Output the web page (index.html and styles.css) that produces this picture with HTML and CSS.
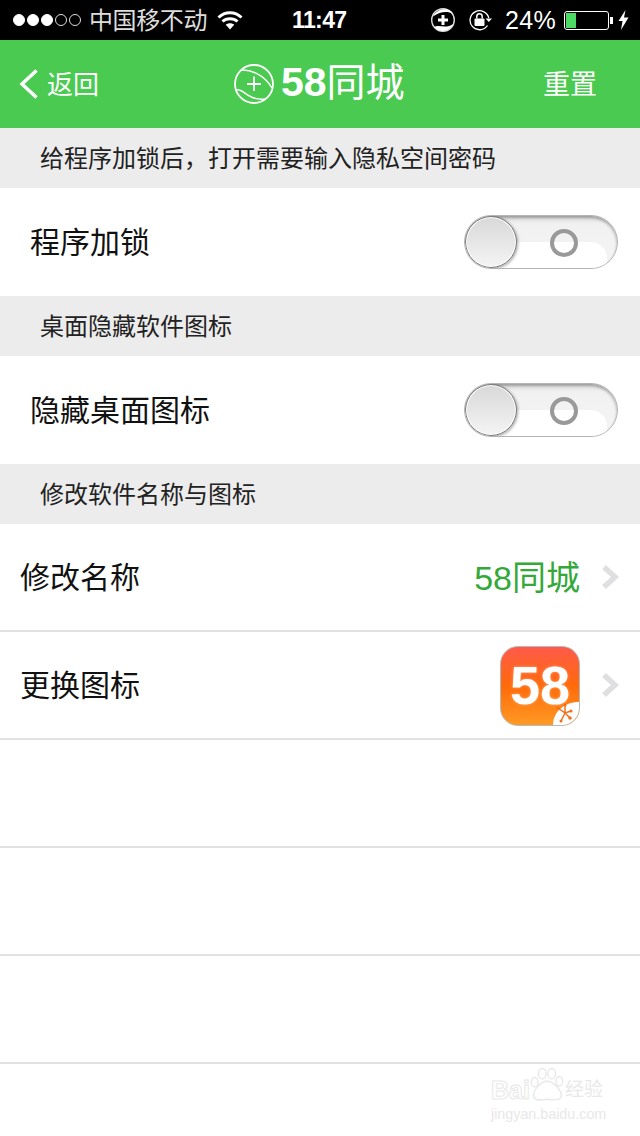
FILE: index.html
```html
<!DOCTYPE html>
<html lang="zh-CN">
<head>
    <meta charset="UTF-8">
    <meta name="viewport" content="width=device-width, initial-scale=1.0">
    <title>58同城</title>
    <link rel="stylesheet" href="styles.css">
</head>
<body>
    <div class="statusbar">
        <div class="status-left">
            <span class="dots">
                <i class="dot on"></i><i class="dot on"></i><i class="dot on"></i><i class="dot"></i><i class="dot"></i>
            </span>
            <span class="carrier">中国移不动</span>
            <svg class="wifi" width="26" height="20" viewBox="0 0 26 20">
                <path d="M1.500 7.500C8 1.200 18 1.200 24.500 7.500" fill="none" stroke="#fff" stroke-width="3"/>
                <path d="M5.500 11.500C9.500 7.800 16.500 7.800 20.500 11.500" fill="none" stroke="#fff" stroke-width="3"/>
                <path d="M13 19.500L8.800 14.800C11 12.800 15 12.800 17.200 14.800Z" fill="#fff"/>
            </svg>
        </div>
        <div class="clock">11:47</div>
        <div class="status-right">
            <svg class="st-plus" width="26" height="26" viewBox="0 0 26 26">
                <circle cx="13" cy="13" r="11.300" fill="none" stroke="#ddd" stroke-width="1.400"/>
                <path d="M3 9.500C6 2 18 -0.500 23 6.500C17 3.800 10 4.500 3 9.500Z" fill="#fff"/>
                <path d="M4 20C9 17 16 22.500 23 17C20 25 9 26.500 4 20Z" fill="#fff"/>
                <path d="M13 8V18M8 13H18" stroke="#fff" stroke-width="3"/>
            </svg>
            <svg class="st-lock" width="24" height="22" viewBox="0 0 24 22">
                <path d="M18.500 16.500A9.500 9.500 0 1 1 19.800 9" fill="none" stroke="#fff" stroke-width="1.300"/>
                <path d="M16.500 9.500H23L19.800 13Z" fill="#fff"/>
                <rect x="5.500" y="9.500" width="10" height="7.500" rx="1" fill="#fff"/>
                <path d="M7.800 9.500V7.500A2.700 2.700 0 0 1 13.200 7.500V9.500" fill="none" stroke="#fff" stroke-width="1.500"/>
            </svg>
            <span class="percent">24%</span>
            <span class="battery"><span class="battery-fill"></span></span>
            <span class="battery-tip"></span>
            <svg class="bolt" width="11" height="20" viewBox="0 0 11 20">
                <path d="M7.500 0L0.500 11H4.500L3 20L10.500 7.500H6Z" fill="#fff"/>
            </svg>
        </div>
    </div>

    <header class="navbar">
        <a class="nav-back">
            <svg width="20" height="32" viewBox="0 0 20 32">
                <path d="M18.500 2.500L4 16L18.500 29.500" fill="none" stroke="#fff" stroke-width="3.500"/>
            </svg>
            <span>返回</span>
        </a>
        <div class="nav-title">
            <svg width="40" height="40" viewBox="0 0 40 40">
                <circle cx="20" cy="20" r="19" fill="none" stroke="#fff" stroke-width="1.800"/>
                <path d="M7 6C16 5.500 30 10 38 24" fill="none" stroke="#fff" stroke-width="1.500"/>
                <path d="M2 26C9 23 13 37 31 35" fill="none" stroke="#fff" stroke-width="1.500"/>
                <path d="M20 12.500V27M13 20H27" stroke="#fff" stroke-width="1.800"/>
            </svg>
            <span class="nav-name"><b>58</b>同城</span>
        </div>
        <a class="nav-reset">重置</a>
    </header>

    <div class="band">给程序加锁后，打开需要输入隐私空间密码</div>
    <div class="row switch-row">
        <span>程序加锁</span>
        <div class="switch"><i class="knob"></i><i class="ring"></i></div>
    </div>

    <div class="band">桌面隐藏软件图标</div>
    <div class="row switch-row">
        <span>隐藏桌面图标</span>
        <div class="switch"><i class="knob"></i><i class="ring"></i></div>
    </div>

    <div class="band">修改软件名称与图标</div>
    <div class="row line">
        <span>修改名称</span>
        <div class="row-right">
            <span class="value">58同城</span>
            <svg class="chevron" width="18" height="26" viewBox="0 0 18 26">
                <path d="M3 3L14 13L3 23" fill="none" stroke="#dfdfe1" stroke-width="5.500"/>
            </svg>
        </div>
    </div>
    <div class="row line">
        <span>更换图标</span>
        <div class="row-right">
            <div class="app-icon">
                <span class="app-num">58</span>
                <svg class="app-corner" width="27" height="27" viewBox="0 0 27 27">
                    <path d="M27 4V27H1C1 14 12 4 27 4Z" fill="#fff"/>
                    <path d="M6 10L13 15L19 13M13 7L13 15L18 20M13 15L9 23" fill="none" stroke="#f0701c" stroke-width="1.500"/>
                    <circle cx="6" cy="10" r="1.600" fill="#f0701c"/>
                    <circle cx="13" cy="7" r="1.500" fill="#f0701c"/>
                    <circle cx="19" cy="13" r="1.600" fill="#f0701c"/>
                    <circle cx="18" cy="20" r="1.800" fill="#f0701c"/>
                    <circle cx="9" cy="23" r="1.500" fill="#f0701c"/>
                </svg>
            </div>
            <svg class="chevron" width="18" height="26" viewBox="0 0 18 26">
                <path d="M3 3L14 13L3 23" fill="none" stroke="#dfdfe1" stroke-width="5.500"/>
            </svg>
        </div>
    </div>
    <div class="row line"></div>
    <div class="row line"></div>
    <div class="row line"></div>

    <!-- 水印 -->
    <div class="watermark">
        <div class="wm-top">
            <span class="wm-bai">Bai</span>
            <svg class="wm-paw" width="36" height="36" viewBox="0 0 38 36">
                <g fill="none" stroke="#e8e8e8" stroke-width="1.500">
                    <ellipse cx="6" cy="15" rx="3.500" ry="5"/>
                    <ellipse cx="14" cy="6" rx="4" ry="5.500"/>
                    <ellipse cx="24" cy="6" rx="4" ry="5.500"/>
                    <ellipse cx="32" cy="14" rx="3.500" ry="5"/>
                    <path d="M19 14C12 14 4 24 5 30C6 35 13 34 19 33C25 34 33 35 34 30C35 24 26 14 19 14Z"/>
                </g>
            </svg>
            <span class="wm-cn">经验</span>
        </div>
        <div class="wm-url">jingyan.baidu.com</div>
    </div>
</body>
</html>
```

FILE: styles.css
```css
* {
    box-sizing: border-box;
}

body {
    position: relative;
    width: 640px;
    height: 1136px;
    margin: 0;
    overflow: hidden;
    background-color: #fff;
    color: #000;
    font-family: "Liberation Sans", "Noto Sans CJK SC", sans-serif;
}

/* status bar */
.statusbar {
    display: flex;
    align-items: center;
    justify-content: space-between;
    height: 40px;
    padding: 0 11px 0 13px;
    background-color: #000;
    color: #fff;
}

.status-left {
    display: flex;
    align-items: center;
    width: 270px;
}

.dots {
    display: flex;
    gap: 2px;
}

.dot {
    width: 12px;
    height: 12px;
    border: 1px solid #ddd;
    border-radius: 50%;
}

.dot.on {
    background-color: #fff;
    border-color: #fff;
}

.carrier {
    margin: 0 0 4px 8px;
    font-size: 24px;
    letter-spacing: -0.4px;
    color: #ddd;
}

.wifi {
    margin-left: 10px;
}

.clock {
    width: 60px;
    margin-left: 9px;
    font-size: 23px;
    font-weight: bold;
    letter-spacing: -0.6px;
}

.status-right {
    display: flex;
    align-items: center;
    margin-left: auto;
}

.st-lock {
    margin-left: 13px;
}

.percent {
    margin-left: 12px;
    font-size: 25px;
    letter-spacing: 0.3px;
}

.battery {
    display: block;
    width: 45px;
    height: 19px;
    margin-left: 8px;
    padding: 1px;
    border: 1px solid #fff;
    border-radius: 3px;
}

.battery-fill {
    display: block;
    width: 10px;
    height: 100%;
    background-color: #4cd964;
}

.battery-tip {
    width: 3px;
    height: 7px;
    margin-left: 1px;
    background-color: #fff;
}

.bolt {
    margin-left: 5px;
}

/* nav bar */
.navbar {
    display: flex;
    align-items: center;
    height: 88px;
    padding: 0 43px 0 18px;
    background-color: #4aca50;
    color: #fff;
}

.nav-back {
    display: flex;
    align-items: center;
    gap: 9px;
    width: 216px;
    font-size: 26px;
}

.nav-back span {
    margin-bottom: 4px;
}

.nav-title {
    display: flex;
    align-items: center;
    gap: 7px;
}

.nav-name {
    margin-bottom: 10px;
    font-size: 39px;
}

.nav-name b {
    font-size: 41px;
}

.nav-reset {
    margin-bottom: 4px;
    margin-left: auto;
    font-size: 27px;
}

/* list */
.band {
    display: flex;
    align-items: center;
    height: 60px;
    padding: 0 0 4px 40px;
    background-color: #ececec;
    font-size: 24px;
    color: #222;
}

.row {
    display: flex;
    align-items: center;
    justify-content: space-between;
    height: 108px;
    padding-left: 20px;
    font-size: 30px;
    color: #111;
    background-color: #fff;
}

.row > span {
    margin-bottom: 4px;
}

.switch-row {
    padding-left: 30px;
    padding-right: 22px;
}

.line {
    border-bottom: 2px solid #e2e2e2;
}

.row-right {
    display: flex;
    align-items: center;
    gap: 21px;
    padding-right: 21px;
}

.value {
    margin-bottom: 4px;
    font-size: 34px;
    color: #34a93a;
}

.switch {
    position: relative;
    width: 154px;
    height: 54px;
    overflow: hidden;
    border: 1px solid #b4b4b4;
    border-radius: 27px;
    background: linear-gradient(#dcdcdc 0, #f1f1f1 8px, #f4f4f4 100%);
    box-shadow: inset 0 2px 3px rgba(0, 0, 0, 0.3);
}

/* glossy lower half of the track */
.switch::after {
    content: "";
    position: absolute;
    top: 26px;
    left: 0;
    width: 142px;
    height: 30px;
    border-top-right-radius: 16px;
    background-color: #fff;
}

.knob {
    position: absolute;
    z-index: 2;
    top: 0;
    left: 0;
    width: 52px;
    height: 52px;
    border: 1px solid #777;
    border-radius: 50%;
    background: linear-gradient(#d8d8d8, #f4f4f4);
    box-shadow: 1px 1px 3px rgba(0, 0, 0, 0.35), inset 0 0 0 1px #fff;
}

.ring {
    position: absolute;
    z-index: 2;
    top: 13px;
    left: 85px;
    width: 28px;
    height: 28px;
    border: 4px solid #999;
    border-radius: 50%;
}

.chevron {
    display: block;
}

.app-icon {
    position: relative;
    width: 80px;
    height: 80px;
    margin-top: 2px;
    overflow: hidden;
    border: 1px solid #b8b8b8;
    border-radius: 18px;
    background: linear-gradient(#ff5a4a 0, #ff6a0a 50%, #ff9a24 100%);
    text-align: center;
}

.app-num {
    display: block;
    font-size: 54px;
    line-height: 76px;
    font-weight: bold;
    color: #fff;
    text-shadow: 0 0 3px rgba(255, 200, 160, 0.7);
}

.app-corner {
    position: absolute;
    right: 0;
    bottom: 0;
}

/* watermark */
.watermark {
    position: absolute;
    top: 1067px;
    left: 491px;
    width: 120px;
    color: #e8e8e8;
}

.wm-top {
    display: flex;
    align-items: flex-end;
    height: 36px;
    white-space: nowrap;
}

.wm-bai {
    width: 38px;
    font-size: 25px;
    line-height: 26px;
    font-weight: bold;
    color: #fff;
    -webkit-text-stroke: 1px #e8e8e8;
}

.wm-paw {
    flex: none;
}

.wm-cn {
    flex: none;
    font-size: 19px;
    line-height: 26px;
}

.wm-url {
    margin-top: 3px;
    font-size: 14.3px;
    line-height: 16px;
    white-space: nowrap;
}
```
